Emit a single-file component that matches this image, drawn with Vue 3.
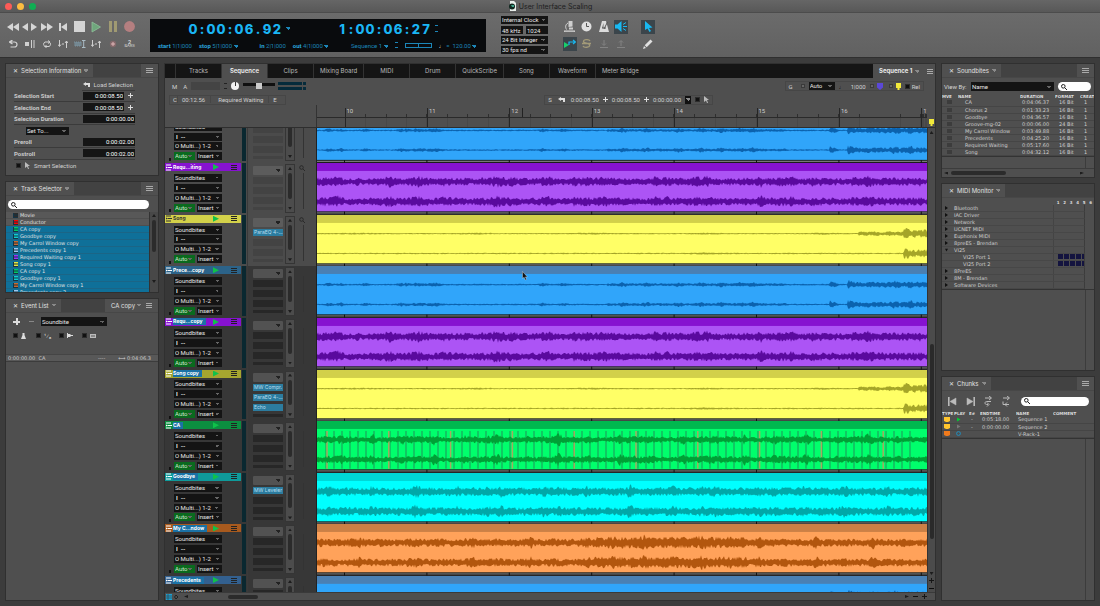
<script setup>
import { ref } from 'vue'

const tabs = ['Tracks', 'Sequence', 'Clips', 'Mixing Board', 'MIDI', 'Drum', 'QuickScribe', 'Song', 'Waveform', 'Meter Bridge']
const activeTab = ref('Sequence')
const clock = [...'0:00:06.92']
const frames = [...'1:00:06:27']
const isMark = c => c === ':' || c === '.'

const selectionRows = [
  { label: 'Selection Start', value: '0:00:08.50', plus: true },
  { label: 'Selection End', value: '0:00:08.50', plus: true },
  { label: 'Selection Duration', value: '0:00:00.00' }
]
const rollRows = [
  { label: 'Preroll', value: '0:00:02.00' },
  { label: 'Postroll', value: '0:00:02.00' }
]
const selector = [
  ['Movie', '#2b2b2b', false], ['Conductor', '#f00', false], ['CA copy', '#0c6', true], ['Goodbye copy', '#1cc', true],
  ['My Carrol Window copy', '#c76a30', true], ['Precedents copy 1', '#9cc8f0', true], ['Required Waiting copy 1', '#93f', true],
  ['Song copy 1', '#e8e840', true], ['CA copy 1', '#0c6', true], ['Goodbye copy 1', '#1cc', true],
  ['My Carrol Window copy 1', '#c76a30', true], ['Precedents copy 2', '#9cc8f0', true]
]
const bites = [
  ['CA', '0:04:06.37', '16 Bit'], ['Chorus 2', '0:01:33.23', '16 Bit'], ['Goodbye', '0:04:36.57', '16 Bit'],
  ['Groove-mg-02', '0:00:06.00', '24 Bit'], ['My Carrol Window', '0:03:49.88', '16 Bit'], ['Precedents', '0:04:25.20', '16 Bit'],
  ['Required Waiting', '0:05:17.60', '16 Bit'], ['Song', '0:04:32.12', '16 Bit']
]
const devices = [
  ['Bluetooth', 'c'], ['IAC Driver', 'c'], ['Network', 'c'], ['UCNET MIDI', 'c'], ['Euphonix MIDI', 'c'], ['8preES - Brendan', 'c'],
  ['VI25', 'o'], ['VI25 Port 1', 'p'], ['VI25 Port 2', 'p'], ['8PreES', 'c'], ['8M - Brendan', 'c'], ['Software Devices', 'c']
]
const chunks = [
  { name: 'Sequence 1', end: '0:05:18.00', color: '#ffc52e', play: '#0c3' },
  { name: 'Sequence 2', end: '0:00:00.00', color: '#ffc52e', play: '#777' },
  { name: 'V-Rack-1', end: '', color: '#f07a1c', play: '' }
]

/* waveform drawing: repeatable noise shaped by an envelope */
function noise(seed) {
  let s = seed
  return () => {
    s = (s * 1664525 + 1013904223) % 4294967296
    return s / 4294967296
  }
}
function wave(seed, center, env) {
  const rnd = noise(seed)
  const up = []
  const down = []
  for (let x = 0; x <= 610; x++) {
    const a = env(x)
    up.push(`${x} ${(center - a * (0.4 + 0.85 * rnd())).toFixed(1)}`)
    down.unshift(`${x} ${(center + a * (0.4 + 0.85 * rnd())).toFixed(1)}`)
  }
  return `M${up.join('L')}L${down.join('L')}Z`
}
const bump = (x, at, w) => Math.max(0, 1 - Math.abs(x - at) / w)
const tail = (x, at, w) => (x >= at ? Math.max(0, 1 - (x - at) / w) : 0)
const blueEnv = x => {
  let a = 0.7
  for (const p of [12, 24, 49, 84, 226, 247, 306, 330, 361, 384, 404, 423, 436]) a += 1.1 * bump(x, p, 6)
  if (x > 88 && x < 128) a += 0.8 * Math.abs(Math.sin(x / 5)) + 0.3
  if (x > 290 && x < 470) a += 0.5
  a += 2.6 * tail(x, 513, 10)
  if (x > 530) a = 2.4 + 2 * tail(x, 530, 8) + 1.2 * bump(x, 578, 5) + 2 * bump(x, 594, 3)
  return a
}
const purpleEnv = x => 3.4 + 0.7 * Math.sin(x / 9) * Math.sin(x / 23) + 1.5 * bump(x % 53, 20, 5) + 0.8 * bump(x % 31, 9, 4)
const songTop = x => (x > 586 ? 3.6 + 2 * tail(x, 586, 8) : x > 541 ? 1.9 + 0.6 * tail(x, 541, 6) : 0.6 + 0.3 * bump(x % 117, 40, 20))
const songBottom = x => (x > 586 ? 3.6 + 2 * tail(x, 586, 8) : 0.6 + 0.4 * bump(x, 390, 30))
const greenEnv = x => 2.8 + 1.6 * bump(x % 62, 56, 4) + 1.2 * bump(x % 31, 24, 4) + 0.5 * Math.sin(x / 12)
const cyanEnv = x => 3.6 + 1.6 * bump(x % 43, 12, 5) + 1 * bump(x % 71, 30, 6)
const orangeEnv = x => (x > 275 && x < 430 ? 4.8 : 3.2) + 1.8 * bump(x % 57, 43, 4) + 0.6 * bump(x % 29, 6, 8)

const kinds = {
  blue: [blueEnv, blueEnv], purple: [purpleEnv, purpleEnv], yellow: [songTop, songBottom],
  green: [greenEnv, greenEnv], cyan: [cyanEnv, cyanEnv], orange: [orangeEnv, orangeEnv]
}
const waves = Object.fromEntries(Object.entries(kinds).map(([k, e], i) => [k, wave(i * 77 + 5, 18.8, e[0]) + wave(i * 31 + 9, 38.8, e[1])]))

const tracks = [
  { name: '', kind: 'blue', tint: 'sky', part: 'tailing', inserts: [] },
  { name: 'Requ...iting', kind: 'purple', tint: 'violet', inserts: [] },
  { name: 'Song', kind: 'yellow', tint: 'lemon', inserts: ['ParaEQ 4-...'] },
  { name: 'Prece...copy', kind: 'blue', tint: 'sky', dark: true, inserts: [] },
  { name: 'Requ...copy', kind: 'purple', tint: 'violet', dark: true, sel: true, inserts: [] },
  { name: 'Song copy', kind: 'yellow', tint: 'olive', dark: true, sel: true, inserts: ['MW Compr.', 'ParaEQ 4-...', 'Echo'] },
  { name: 'CA', kind: 'green', tint: 'leaf', dark: true, sel: true, inserts: [] },
  { name: 'Goodbye', kind: 'cyan', tint: 'teal', dark: true, sel: true, inserts: ['MW Leveler'] },
  { name: 'My C...ndow', kind: 'orange', tint: 'rust', dark: true, sel: true, inserts: [] },
  { name: 'Precedents', kind: 'blue', tint: 'navy', dark: true, sel: true, inserts: [] }
]
const beats = Array.from({ length: 74 }, (_, i) => 9 + i * 8)
const accents = Array.from({ length: 10 }, (_, i) => 10 + i * 61.8)
const bars = Array.from({ length: 8 }, (_, i) => 27.5 + i * 82.4)
</script>

<template>
  <div class="app">
    <header class="titlebar">
      <div class="lights"><i class="r"></i><i class="y"></i><i class="g"></i></div>
      <div class="title">
        <svg width="9" height="10" viewBox="0 0 9 10"><path d="M2 0h4l2 2v8H2z" fill="#e8eeea" /><circle cx="4" cy="5.500" r="3" fill="#10281f" /><path d="M3 4h3v2H4z" fill="#3fa58a" /></svg>
        <span>User Interface Scaling</span>
      </div>
    </header>

    <section class="toolbar">
      <div class="transport">
        <button aria-label="Rewind"><svg width="12" height="8" viewBox="0 0 12 8"><path d="M6 0v8L0 4zM12 0v8L6 4z" fill="#d6d6d6" /></svg></button>
        <span class="pair">
          <button aria-label="Step back"><svg width="6" height="8" viewBox="0 0 6 8"><path d="M6 0v8L0 4z" fill="#d6d6d6" /></svg></button>
          <button aria-label="Step forward"><svg width="6" height="8" viewBox="0 0 6 8"><path d="M0 0v8l6-4z" fill="#d6d6d6" /></svg></button>
        </span>
        <button aria-label="Fast forward"><svg width="12" height="8" viewBox="0 0 12 8"><path d="M0 0v8l6-4zM6 0v8l6-4z" fill="#d6d6d6" /></svg></button>
        <button aria-label="Return to start"><svg width="8" height="8" viewBox="0 0 8 8"><path d="M0 0h2v8H0zM8 0v8L2 4z" fill="#d6d6d6" /></svg></button>
        <button aria-label="Stop"><svg width="11" height="11" viewBox="0 0 11 11"><path d="M0 0h11v11H0z" fill="#d4d4d4" /></svg></button>
        <button aria-label="Play"><svg width="10" height="12" viewBox="0 0 10 12"><path d="M1 1l8.500 5L1 11z" fill="#6fa67c" stroke="#8fc09a" stroke-width=".8" /></svg></button>
        <button aria-label="Pause"><svg width="8" height="11" viewBox="0 0 8 11"><path d="M0 0h3v11H0zM5 0h3v11H5z" fill="#a09a72" /></svg></button>
        <button aria-label="Record"><svg width="11" height="11" viewBox="0 0 11 11"><circle cx="5.500" cy="5.500" r="5.400" fill="#b57f80" /></svg></button>
        <button aria-label="Undo play"><svg width="9" height="8" viewBox="0 0 9 8"><path d="M3.500 0L.5 2l3 2M1 2h4.500a2.500 2.500 0 0 1 0 5H1.500" fill="none" stroke="#d4d4d4" stroke-width="1.200" /></svg></button>
        <button aria-label="Stop at"><svg width="10" height="8" viewBox="0 0 10 8"><path d="M0 2h4v4H0zM6 0h1v8H6zM8.500 0h1v8h-1z" fill="#d0d0d0" /></svg></button>
        <button aria-label="Loop"><svg width="10" height="8" viewBox="0 0 10 8"><path d="M3 6.500a2.500 2.500 0 0 1 0-4.500h4M7 2a2.400 2.400 0 0 1 0 4.500H3M6 .5L8 2 6 3.500M4.500 5L3 6.500 4.500 8" fill="none" stroke="#d0d0d0" /></svg></button>
        <button aria-label="Auto record"><svg width="10" height="8" viewBox="0 0 10 8"><path d="M1.500 0v6M0 4.500l1.500 2 1.500-2M4 4h2M8.500 8V1M7 3l1.500-2L10 3" fill="none" stroke="#d0d0d0" /></svg></button>
        <button aria-label="Overdub"><svg width="12" height="8" viewBox="0 0 12 8"><path d="M0 2h1v4h1V2h1v4h1V2h1v4h1V2h1v4" fill="none" stroke="#7f9cab" stroke-width=".8" /><path d="M8 .5h3.500M8 7.500h3.500M9.700.5v7" stroke="#aabcc5" fill="none" /></svg></button>
        <button aria-label="Punch"><svg width="10" height="8" viewBox="0 0 10 8"><path d="M1.500 0v6M0 4.500l1.500 2 1.500-2M4 4h2M8.500 8V1M7 3l1.500-2L10 3" fill="none" stroke="#d0d0d0" /></svg></button>
        <button aria-label="Click"><svg width="8" height="8" viewBox="0 0 8 8"><circle cx="4" cy="4" r="3.200" fill="#84696b" /><path d="M4 2v4M2 4h4" stroke="#e0b6b8" /></svg></button>
        <button class="count" aria-label="Countoff"><b>2</b><small>BARS</small></button>
      </div>

      <div class="lcd">
        <div class="time"><span v-for="(c, i) in clock" :key="i" :class="{ mark: isMark(c) }">{{ c }}</span><i class="caret"></i></div>
        <div class="time"><span v-for="(c, i) in frames" :key="i" :class="{ mark: isMark(c) }">{{ c }}</span><i class="spin"></i></div>
        <div class="marks">
          <span><b>start</b> 1|1|000</span><span><b>stop</b> 5|1|000 <i class="caret"></i></span>
          <span class="mid"><b>in</b> 2|1|000</span><span><b>out</b> 4|1|000 <i class="caret"></i></span>
        </div>
        <div class="marks tempo">
          <span>Sequence 1 <i class="caret"></i></span><i class="bar2"></i><i class="slide"></i>
          <span><b class="note">♩</b> = &nbsp;120.00 <i class="caret"></i></span>
        </div>
      </div>

      <div class="setup">
        <select class="dd wide" aria-label="Clock"><option>Internal Clock</option></select>
        <button class="box">48 kHz</button><button class="box">1024</button>
        <select class="dd wide" aria-label="Bit depth"><option>24 Bit Integer</option></select>
        <select class="dd wide" aria-label="Frame rate"><option>30 fps nd</option></select>
      </div>

      <div class="modes">
        <button aria-label="Microscope"><svg width="11" height="11" viewBox="0 0 11 11"><path d="M4.500 0h4v5.500l-4 .5zM5 6.500h4v2H5z" fill="#cfcfcf" /><path d="M4 2C1.500 3.500 1 6 2.500 8.500M0 10h11v1H0z" fill="none" stroke="#d8d8d8" /></svg></button>
        <button aria-label="Clock"><svg width="11" height="11" viewBox="0 0 11 11"><circle cx="5.500" cy="5.500" r="5" fill="#e0e0e0" /><path d="M5.500 2v3.500H8" fill="none" stroke="#555" /></svg></button>
        <button aria-label="Metronome"><svg width="10" height="11" viewBox="0 0 10 11"><path d="M3 0h4l3 11H0z" fill="#dcdcdc" /><path d="M5 8L8.500 1M3 7h4" stroke="#555" /><path d="M4.500 2l-1.500 5h1.500z" fill="#666" /></svg></button>
        <button class="on" aria-label="Audible"><svg width="12" height="11" viewBox="0 0 12 11"><path d="M0 3.500h2.500L6.500 0v11L2.500 7.500H0z" fill="#18b9f2" /><path d="M8 3.500l3-2M8 5.500h4M8 7.500l3 2" stroke="#18b9f2" /></svg></button>
        <button class="on" aria-label="Chase"><svg width="12" height="10" viewBox="0 0 12 10"><path d="M0 3v6l5-3z" fill="#18d06b" /><path d="M5 6V3h6M9 1l2.500 2L9 5" fill="none" stroke="#18b9f2" stroke-width="1.200" /></svg></button>
        <button aria-label="Solo"><svg width="9" height="9" viewBox="0 0 9 9"><path d="M8 2C7 0 1.500.3 1.500 2.400S7.700 4 7.700 6.300 2 9 1 7M0 4.500h9" fill="none" stroke="#a39a78" stroke-width="1.300" /></svg></button>
        <button aria-label="Bounce in"><svg width="8" height="8" viewBox="0 0 8 8"><path d="M4 0v5M2 3.500l2 2 2-2M0 7.500h8" fill="none" stroke="#838383" /></svg></button>
        <button aria-label="Bounce out"><svg width="8" height="8" viewBox="0 0 8 8"><path d="M4 6V1M2 2.500l2-2 2 2M0 7.500h8" fill="none" stroke="#838383" /></svg></button>
      </div>
      <div class="tools">
        <button class="on" aria-label="Pointer"><svg width="9" height="11" viewBox="0 0 9 11"><path d="M1 0l7.500 6.500L5 7l2 3-1.500 1-2-3.500L1 9z" fill="#18b9f2" /></svg></button>
        <button aria-label="Pencil"><svg width="10" height="10" viewBox="0 0 10 10"><path d="M0 10l1-3 2 2zM1.700 6.300L7.500.5l2 2-5.800 5.800z" fill="#e0e0e0" /></svg></button>
      </div>
    </section>

    <main class="work">
      <aside class="side left">
        <section class="panel info">
          <div class="head"><div class="tab"><i class="x">✕</i>Selection Information<i class="caret"></i></div><button class="menu" aria-label="Panel menu"><i></i></button></div>
          <div class="fields">
            <div class="load"><svg width="7" height="5" viewBox="0 0 7 5"><path d="M3 0L0 2l3 2V3h2v2h2V1H3z" fill="#ddd" /></svg><span>Load Selection</span></div>
            <label v-for="r in selectionRows" :key="r.label" class="line"><b>{{ r.label }}</b><input :value="r.value" /><i v-if="r.plus" class="plus"></i></label>
            <div class="setto"><select class="dd" aria-label="Set to"><option>Set To...</option></select></div>
            <label v-for="r in rollRows" :key="r.label" class="line"><b>{{ r.label }}</b><input :value="r.value" /></label>
            <label class="smart"><input type="checkbox" /><svg width="5" height="7" viewBox="0 0 5 7"><path d="M0 0l5 4H3l1 3-1 0-1-2.500L0 6z" fill="#bbb" /></svg>Smart Selection</label>
          </div>
        </section>

        <section class="panel selector">
          <div class="head"><div class="tab"><i class="x">✕</i>Track Selector<i class="caret"></i></div><button class="menu" aria-label="Panel menu"><i></i></button></div>
          <div class="search"><svg width="6" height="6" viewBox="0 0 6 6"><circle cx="2.300" cy="2.300" r="1.800" fill="none" stroke="#222" /><path d="M3.600 3.600L6 6" stroke="#222" /></svg><input aria-label="Search tracks" /></div>
          <div class="scrolly">
            <ul class="tracklist">
              <li v-for="t in selector" :key="t[0]" :class="{ sel: t[2] }"><svg width="5" height="5" viewBox="0 0 5 5"><rect width="5" height="5" fill="#153445" /><path d="M1 0h4v1.500H1zM1 2.500h4V4H1z" :fill="t[1]" /></svg>{{ t[0] }}</li>
            </ul>
            <div class="vbar"><i class="up"></i><i class="thumb"></i><i class="down"></i></div>
          </div>
        </section>

        <section class="panel events">
          <div class="head"><div class="tab"><i class="x">✕</i>Event List<i class="caret"></i></div><div class="menu ca">CA copy<i class="caret"></i><button class="bars" aria-label="Panel menu"></button></div></div>
          <div class="evtools"><i class="plus big"></i><i class="minus"></i><select class="dd" aria-label="Event type"><option>Soundbite</option></select></div>
          <div class="evchecks">
            <label><input type="checkbox" aria-label="Metronome grid" /><svg width="5" height="6" viewBox="0 0 5 6"><path d="M1.500 0h2v2L5 6H0l1.500-4z" fill="#ddd" /></svg></label>
            <label><input type="checkbox" aria-label="Fraction grid" /><span>¹⁄₈</span></label>
            <label><input type="checkbox" aria-label="Marker grid" /><svg width="6" height="5" viewBox="0 0 6 5"><path d="M0 0h1v5H0zM1 1h2l1 1h2v1H4L3 4H1z" fill="#ddd" /></svg></label>
            <label><input type="checkbox" aria-label="Frame grid" /><svg width="6" height="4" viewBox="0 0 6 4"><path d="M0 0h6v4H0z" fill="#bbb" /><path d="M1 2h4" stroke="#555" /></svg></label>
          </div>
          <div class="evrow"><span>0:00:00.00&nbsp; CA</span><span>----</span><span>⟷ 0:04:06.3</span></div>
          <div class="fill"></div>
        </section>
      </aside>

      <section class="center">
        <nav class="tabs">
          <i class="stub"></i>
          <button v-for="t in tabs" :key="t" :class="{ active: t === activeTab }" @click="activeTab = t">{{ t }}</button>
          <div class="seq"><b>Sequence 1</b><i class="caret"></i><i class="bars"></i></div>
        </nav>
        <div class="strip">
          <div class="grp"><span>M</span><span class="gap">A</span><i class="well"></i><i class="updn"></i><i class="knob"></i><i class="fader"></i><i class="meter"></i></div>
          <div class="grp boxed right"><span>G</span><i class="sq first"></i><select class="dd auto" aria-label="Grid"><option>Auto</option></select><b class="dark">♩</b><span class="gap">1|000</span><i class="sq"></i><svg width="6" height="7" viewBox="0 0 6 7"><path d="M0 0h6v4.500L3 7 0 4.500z" fill="#5b48d8" /></svg><i class="sq gap"></i><svg width="5" height="7" viewBox="0 0 5 7"><path d="M0 0h5v5H3.500v2h-2V5H0z" fill="#f3ea3a" /></svg><label class="rel"><input type="checkbox" /> Rel</label></div>
        </div>
        <div class="strip low">
          <div class="grp boxed counter"><span>C</span><span class="cnt">00:12.56</span><span class="cnt name">Required Waiting</span><span class="cnt">E</span></div>
          <div class="grp boxed pos"><span>S</span><svg class="gap" width="7" height="5" viewBox="0 0 7 5"><path d="M3 0L0 2l3 2V3h2v2h2V1H3z" fill="#ddd" /></svg><span class="gap">0:00:08.50</span><i class="plus"></i><span>0:00:08.50</span><i class="plus"></i><span>0:00:00.00</span><button class="drop" aria-label="Units"><i class="caret"></i></button><input type="checkbox" aria-label="Smart selection" /><svg width="5" height="7" viewBox="0 0 5 7"><path d="M0 0l5 4H3l1 3H3L2 4.500 0 6z" fill="#bbb" /></svg></div>
        </div>
        <div class="timeline">
          <div class="ruler">
            <div class="cell nolabel"></div>
            <div v-for="n in 7" :key="n" class="cell"><span>{{ n + 9 }}</span></div>
            <div class="cell"><span>17</span></div>
            <i class="playhead"></i>
          </div>
          <div class="pin"><svg width="5" height="7" viewBox="0 0 5 7"><path d="M0 0h5v5H3.500v2h-2V5H0z" fill="#f3ea3a" /></svg></div>
        </div>
        <div class="body">
          <div class="tracks">
            <div v-for="(t, i) in tracks" :key="i" class="track" :class="[t.part, t.kind, { dim: t.dark }]">
              <div class="inner">
                <div class="ctl">
                  <div class="thead" :class="t.tint"><svg width="6" height="7" viewBox="0 0 6 7"><path d="M0 .5h5v1H0zM0 5.500h5v1H0zM2 3h4v1H2zM0 2.500L2 3.500 0 4.500z" fill="currentColor" /></svg><b :class="{ hl: t.sel }">{{ t.name }}</b><i class="tri"></i><i class="bars"></i></div>
                  <div class="opts">
                    <select class="dd" aria-label="Content"><option>Soundbites</option></select>
                    <select class="dd bold" aria-label="Input"><option>I&nbsp; --</option></select>
                    <select class="dd out" aria-label="Output"><option>O Multi...) 1-2</option></select>
                    <div class="two"><select class="dd green" aria-label="Automation"><option>Auto</option></select><select class="dd" aria-label="Insert view"><option>Insert</option></select></div>
                  </div>
                </div>
                <i class="vu"></i>
                <div class="ins">
                  <button class="pick" aria-label="Insert preset"><i class="caret"></i></button>
                  <div v-for="n in 4" :key="n" class="slot" :class="{ used: t.inserts[n - 1] }">{{ t.inserts[n - 1] }}</div>
                </div>
                <div class="vbar mini"><i class="up"></i><i class="thumb"></i><i class="down"></i></div>
                <div class="zoomer"><svg width="6" height="6" viewBox="0 0 6 6"><circle cx="2.500" cy="2.500" r="1.800" fill="none" stroke="#222" stroke-width=".8" /><path d="M4 4l2 2" stroke="#222" stroke-width=".8" /></svg></div>
                <div class="clip">
                  <svg viewBox="0 0 610 52" preserveAspectRatio="none">
                    <rect class="cbody" width="610" height="49" />
                    <rect class="chead" width="610" height="8" />
                    <g v-if="t.kind === 'green'">
                      <path v-for="b in beats" :key="b" :d="`M${b} 10V48`" stroke="#23915a" stroke-width="1" />
                      <path v-for="b in accents" :key="b" :d="`M${b} 10V48`" stroke="#a8a860" stroke-width="1.500" />
                    </g>
                    <path class="cwave" :d="waves[t.kind]" />
                    <rect y="48.800" width="610" height="1" fill="#16201f" />
                    <rect y="49.800" width="610" height="1.200" fill="#777" />
                    <rect y="51" width="610" height="1" fill="#1c1c1c" />
                    <path v-for="b in bars" :key="b" :d="`M${b} 49V52`" stroke="#111" />
                  </svg>
                </div>
              </div>
            </div>
            <svg class="cursor" width="6" height="10" viewBox="0 0 6 10"><path d="M.5.5v7l1.600-1.300L3.300 9l1.200-.6-1.100-2.500h2z" fill="#111" stroke="#ddd" stroke-width=".4" /></svg>
          </div>
          <div class="vscroll"><i class="up"></i><div class="rail"><i class="thumb"></i></div><i class="down"></i><i class="plus k"></i><i class="minus k"></i></div>
        </div>
        <footer class="hscroll"><svg width="13" height="6" viewBox="0 0 13 6"><path d="M0 0h6v6H0z" fill="#1fa0cf" /><path d="M2 0v6M0 2h6M0 4h6" stroke="#30434c" stroke-width=".7" /><path d="M10 1l2 2-2 2-1.500-2z" fill="none" stroke="#222" /></svg><i class="lft"></i><i class="thumb"></i><span class="ends"><i class="rgt"></i><i class="minus k"></i><i class="plus k"></i></span></footer>
      </section>

      <aside class="side rightcol">
        <section class="panel bites">
          <div class="head"><div class="tab"><i class="x">✕</i>Soundbites<i class="caret"></i></div><button class="menu" aria-label="Panel menu"><i></i></button></div>
          <div class="viewby"><label for="viewby">View By:</label><select id="viewby" class="dd"><option>Name</option></select><div class="search"><svg width="6" height="6" viewBox="0 0 6 6"><circle cx="2.300" cy="2.300" r="1.800" fill="none" stroke="#222" /><path d="M3.600 3.600L6 6" stroke="#222" /></svg><input aria-label="Search soundbites" /></div></div>
          <table class="list soundbites">
            <colgroup><col class="c1" /><col class="c2" /><col class="c3" /><col class="c4" /><col /></colgroup>
            <thead><tr><th>MVE</th><th>NAME</th><th>DURATION</th><th>FORMAT</th><th>CREAT</th></tr></thead>
            <tbody><tr v-for="b in bites" :key="b[0]"><td><i class="chip"></i></td><td class="nm">{{ b[0] }}</td><td class="du">{{ b[1] }}</td><td class="fm">{{ b[2] }}</td><td class="fm">1</td></tr></tbody>
          </table>
          <div class="fill lined"></div>
          <div class="hbar"><i class="lft"></i><i class="thumb"></i><i class="rgt"></i></div>
        </section>

        <section class="panel midi">
          <div class="head"><div class="tab"><i class="x">✕</i>MIDI Monitor<i class="caret"></i></div></div>
          <div class="chans"><span v-for="n in 6" :key="n">{{ n }}</span></div>
          <ul class="devices">
            <li v-for="d in devices" :key="d[0]" :class="d[1]"><i class="tw"></i><span>{{ d[0] }}</span><em><template v-if="d[1] === 'p'"><i v-for="n in 5" :key="n"></i></template></em></li>
          </ul>
          <div class="fill lined"></div>
        </section>

        <section class="panel chunks">
          <div class="head"><div class="tab"><i class="x">✕</i>Chunks<i class="caret"></i></div><button class="menu" aria-label="Panel menu"><i></i></button></div>
          <div class="ctools">
            <button aria-label="Previous chunk"><svg width="9" height="9" viewBox="0 0 9 9"><path d="M0 0h1.300v9H0zM8 1v7L2 4.500z" fill="#bbb" stroke="#bbb" stroke-width=".5" /></svg></button>
            <button aria-label="Next chunk"><svg width="9" height="9" viewBox="0 0 9 9"><path d="M7.700 0H9v9H7.700zM1 1v7l6-3.500z" fill="#bbb" stroke="#bbb" stroke-width=".5" /></svg></button>
            <button aria-label="Chain chunks"><svg width="9" height="11" viewBox="0 0 9 11"><path d="M1 2h6M5 0l2.500 2L5 4M7 5.500H2.500c-2 0-2 3 0 3H4M3 6.500l2 2-2 2" fill="none" stroke="#bbb" /></svg></button>
            <button aria-label="Cue chunks"><svg width="9" height="11" viewBox="0 0 9 11"><path d="M1 2h6M5 0l2.500 2L5 4M1 5.500v3h6M5 6.500l-2 2 2 2" fill="none" stroke="#bbb" /></svg></button>
            <div class="search"><svg width="6" height="6" viewBox="0 0 6 6"><circle cx="2.300" cy="2.300" r="1.800" fill="none" stroke="#222" /><path d="M3.600 3.600L6 6" stroke="#222" /></svg><input aria-label="Search chunks" /></div>
          </div>
          <table class="list chunklist">
            <colgroup><col class="k1" /><col class="k2" /><col class="k3" /><col class="k4" /><col class="k5" /><col /></colgroup>
            <thead><tr><th>TYPE</th><th>PLAY</th><th>E#</th><th>ENDTIME</th><th>NAME</th><th>COMMENT</th></tr></thead>
            <tbody><tr v-for="c in chunks" :key="c.name">
              <td><svg width="6" height="5" viewBox="0 0 6 5"><path d="M0 0h6v4L4 5H2L0 4z" :fill="c.color" /></svg></td>
              <td><svg width="5" height="5" viewBox="0 0 5 5"><path v-if="c.play" d="M1 .5l3.500 2L1 4.500z" :fill="c.play" /><circle v-else cx="2.500" cy="2.500" r="1.900" fill="none" stroke="#1f8fc0" /></svg></td>
              <td>{{ c.end ? '-' : '' }}</td><td>{{ c.end }}</td><td>{{ c.name }}</td><td></td>
            </tr></tbody>
          </table>
          <div class="fill lined"></div>
        </section>
      </aside>
    </main>
  </div>
</template>

<style>
html, body { margin: 0; background: #3d3d3d; }
</style>

<style scoped>
* { box-sizing: border-box; }
.app { height: 100vh; display: flex; flex-direction: column; overflow: hidden; background: #3c3c3c; color: #d0d0d0; font: 6px/7px Roboto, sans-serif; }
i, em { font-style: normal; }
button { border: 0; padding: 0; background: none; color: inherit; font: inherit; display: flex; align-items: center; justify-content: center; }
input { border: 0; padding: 0; margin: 0; font: inherit; min-width: 0; outline: 0; }
ul { list-style: none; margin: 0; padding: 0; }
svg { display: block; flex: none; }
input[type="checkbox"] { appearance: none; width: 5px; height: 5px; border: 1px solid #2c2c2c; background: #111; flex: none; }

.caret { display: inline-block; width: 4px; height: 3px; flex: none; background: conic-gradient(from 315deg at 50% 100%, #8a8a8a 90deg, transparent 0); }
.dd { appearance: none; border: 0; border-radius: 0; margin: 0; padding: 0 0 0 1px; height: 8px; color: #e8e8e8; font: 6px/8px Roboto, sans-serif; min-width: 0; background: conic-gradient(from 315deg at 50% 100%, #666 90deg, transparent 0) right 3px center / 4px 2px no-repeat #141414; }
.plus { width: 5px; height: 5px; flex: none; background: linear-gradient(#ddd, #ddd) center / 1px 5px no-repeat, linear-gradient(#ddd, #ddd) center / 5px 1px no-repeat; }
.plus.big { width: 7px; height: 7px; background-size: 2px 7px, 7px 2px; }
.plus.k, .minus.k { filter: brightness(0.1); }
.minus { width: 5px; height: 5px; flex: none; background: linear-gradient(#888, #888) center / 5px 1px no-repeat; }
.bars { width: 6px; height: 5px; flex: none; background: repeating-linear-gradient(#aaa 0 1px, transparent 1px 2px); }
.up, .down, .lft, .rgt { width: 4px; height: 3px; flex: none; background: #1c1c1c; clip-path: polygon(50% 0, 100% 100%, 0 100%); }
.down { clip-path: polygon(0 0, 100% 0, 50% 100%); }
.lft { clip-path: polygon(100% 0, 100% 100%, 0 50%); }
.rgt { clip-path: polygon(0 0, 100% 50%, 0 100%); }

.titlebar { flex: none; height: 13px; position: relative; display: flex; align-items: center; justify-content: center; background: linear-gradient(#666, #585858); border-bottom: 1px solid #4c4c4c; }
.lights { position: absolute; left: 5px; top: 3px; display: flex; gap: 5px; }
.lights i { width: 7px; height: 7px; border-radius: 50%; }
.lights .r { background: #fc5b57; }
.lights .y { background: #fdbc40; }
.lights .g { background: #0fae53; }
.title { display: flex; align-items: center; gap: 2px; font: 7px/13px Inter, sans-serif; color: #1e1e1e; }

.toolbar { flex: none; height: 45px; display: flex; align-items: center; padding: 0 5px; background: linear-gradient(#6b6b6b, #616161); border-bottom: 1px solid #2f2f2f; }
.transport { width: 133px; display: grid; grid-template-columns: repeat(8, 1fr); grid-auto-rows: 17px; place-items: center; margin-right: 12px; }
.pair { display: flex; gap: 3px; }
.count { flex-direction: column; color: #ddd; font: 5px/4px Inter, sans-serif; }
.count small { font-size: 4px; line-height: 4px; }
.lcd { width: 336px; height: 33px; background: #090b0d; display: grid; grid-template-columns: 187px 1fr; grid-template-rows: 20px 13px; color: #1c86b8; }
.time { display: flex; align-items: center; padding-left: 38px; color: #1ab6f5; font: 800 13px/20px Inter, sans-serif; }
.time + .time { padding-left: 0; }
.time span { width: 10px; text-align: center; flex: none; }
.time .mark { width: 8px; }
.time .caret { margin-left: 4px; }
.spin { width: 3px; height: 7px; margin-left: 4px; border: 1px solid #1c86b8; border-width: 1px 0; }
.marks { display: flex; align-items: center; padding-left: 8px; gap: 7px; }
.marks b { color: #2ba6dd; }
.marks .mid { margin-left: 15px; }
.marks .caret, .time .caret { background: conic-gradient(from 315deg at 50% 100%, #1c86b8 90deg, transparent 0); }
.tempo { padding-left: 14px; }
.tempo .bar2 { width: 3px; height: 6px; border: 1px solid #1c86b8; border-width: 1px 0; }
.tempo .slide { width: 27px; height: 5px; border: 1px solid #1c86b8; background: linear-gradient(#1c86b8, #1c86b8) center / 1px 5px no-repeat; }
.marks .note { color: #ddd; }
.setup { width: 47px; margin-left: 15px; display: grid; grid-template-columns: 22px 1fr; gap: 2px 3px; }
.setup .wide { grid-column: span 2; }
.box { height: 8px; background: #141414; color: #e8e8e8; justify-content: flex-start; padding-left: 1px; }
.modes { margin-left: 13px; display: grid; grid-template-columns: repeat(4, 17px); grid-auto-rows: 17px; place-items: center; }
.tools { margin-left: 12px; display: grid; grid-auto-rows: 17px; place-items: center; }
.modes button, .tools button { width: 14px; height: 14px; }
.modes .on, .tools .on { background: #3b454b; }

.work { flex: 1; min-height: 0; display: grid; grid-template-columns: 154px minmax(0, 1fr) 154px; gap: 5px; padding: 5px; }
.side { display: grid; min-height: 0; min-width: 0; gap: 5px; }
.left { grid-template-rows: 113px 112px minmax(0, 1fr); }
.rightcol { grid-template-rows: 115px 188px minmax(0, 1fr); }
.panel { background: #4f4f4f; border: 1px solid #303030; display: flex; flex-direction: column; overflow: hidden; min-height: 0; min-width: 0; }
.head { flex: none; height: 14px; background: #424242; display: flex; justify-content: space-between; align-items: stretch; border-bottom: 1px solid #474747; }
.tab { display: flex; align-items: center; gap: 3px; background: #505050; padding: 0 5px 0 7px; font: 6px/13px Inter, sans-serif; color: #e0e0e0; }
.tab .x { font: 6px/13px "DejaVu Sans", sans-serif; }
.menu { width: 17px; background: #505050; }
.menu i { width: 7px; height: 6px; background: repeating-linear-gradient(#aaa 0 1px, transparent 1px 2px); }
.menu.ca { width: auto; padding: 0 6px; display: flex; align-items: center; gap: 2px; font-family: Inter, sans-serif; color: #e0e0e0; }
.menu.ca .caret { height: 3px; width: 4px; background: conic-gradient(from 315deg at 50% 100%, #8a8a8a 90deg, transparent 0); margin-right: 3px; }
.fill { flex: 1; }

.fields { flex: 1; padding: 1px 23px 4px 8px; display: grid; grid-template-columns: minmax(0, 1fr); grid-template-rows: repeat(8, minmax(0, 1fr)); }
.load, .line, .smart, .setto { display: flex; align-items: center; min-width: 0; }
.load { justify-content: flex-end; gap: 4px; padding-right: 2px; margin-left: 68px; border-bottom: 1px solid #3b3b3b; }
.line { border-bottom: 1px solid #3b3b3b; }
.line b { width: 69px; flex: none; color: #cacaca; }
.line input { flex: 1; width: 0; height: 8px; background: #151515; color: #fff; text-align: right; padding-right: 1px; }
.line .plus { margin: 0 2px 0 4px; }
.setto { padding-left: 12px; }
.setto .dd { width: 43px; }
.smart { gap: 4px; padding-left: 2px; }

.search { flex: none; height: 9px; border-radius: 5px; background: #fff; display: flex; align-items: center; padding: 0 3px; overflow: hidden; }
.search input { flex: 1; width: 0; background: none; }
.selector .search { margin: 4px 9px 3px 2px; }
.scrolly { flex: 1; min-height: 0; display: flex; }
.tracklist { flex: 1; overflow: hidden; font: 5px/7px "DejaVu Sans", sans-serif; color: #e0e0e0; background: #585858; }
.tracklist li { display: flex; align-items: center; gap: 2px; height: 7px; padding-left: 7px; border-bottom: 1px solid #4e4e4e; }
.tracklist .sel { background: #0f7099; border-color: #1b6586; }
.vbar { width: 9px; flex: none; background: #484848; border-left: 1px solid #333; display: flex; flex-direction: column; align-items: center; padding: 2px 0 9px; }
.vbar .thumb { width: 4px; height: 32px; margin-top: 3px; background: #2b2b2b; border-radius: 2px; }
.vbar .down { margin-top: auto; }

.evtools { display: flex; align-items: center; padding: 4px 7px 0; gap: 9px; }
.evtools .dd { width: 66px; height: 9px; margin-left: -2px; }
.evchecks { display: flex; padding: 6px 7px; height: 19px; }
.evchecks label { width: 23px; display: flex; align-items: center; gap: 3px; color: #ddd; }
.evrow { margin-top: 9px; height: 8px; padding: 0 7px 0 2px; display: grid; grid-template-columns: 90px 1fr auto; align-items: center; font: 5px/7px "DejaVu Sans", sans-serif; border-top: 1px solid #454545; border-bottom: 1px solid #3c3c3c; background: #585858; white-space: nowrap; }

.center { display: flex; flex-direction: column; min-height: 0; background: #4f4f4f; border: 1px solid #303030; }
.tabs { flex: none; height: 14px; display: flex; background: #151515; font: 6px/14px Inter, sans-serif; color: #b8b8b8; }
.stub { width: 10px; }
.tabs button { min-width: 46px; padding: 0 6px; border-left: 1px solid #333; white-space: nowrap; }
.tabs button.active { background: #4f4f4f; color: #f0f0f0; font-weight: 600; }
.seq { margin-left: auto; width: 62px; background: #4f4f4f; display: flex; align-items: center; gap: 3px; padding-left: 6px; color: #e8e8e8; }
.seq .bars { margin-left: 5px; }
.strip { flex: none; height: 16px; display: flex; align-items: center; justify-content: space-between; padding: 0 11px 0 4px; }
.strip.low { height: 11px; padding-right: 222px; }
.grp { display: flex; align-items: center; gap: 4px; height: 10px; padding: 0 3px; color: #d0d0d0; }
.boxed { border: 1px solid #464646; }
.grp .gap { margin-left: 2px; }
.counter { gap: 0; }
.cnt { border-left: 1px solid #464646; padding: 0 5px 0 4px; }
.cnt.name { padding-left: 7px; }
.well { width: 29px; height: 8px; background: #444; }
.updn { width: 3px; height: 6px; border: 1px solid #222; border-width: 1px 0; }
.knob { width: 8px; height: 8px; border-radius: 50%; background: linear-gradient(#333, #333) center top / 1px 4px no-repeat #f2f2f2; }
.fader { width: 32px; height: 6px; background: linear-gradient(#ccc, #ccc) center / 6px 6px no-repeat, linear-gradient(#101010, #101010) top / 32px 3px no-repeat; }
.meter { width: 28px; height: 8px; margin-left: -1px; background: linear-gradient(#4f4f4f, #4f4f4f) 24px 0 / 1px 8px no-repeat, linear-gradient(#062b3b 3px, transparent 3px 5px, #062b3b 5px); }
.sq { width: 4px; height: 4px; background: #666; border: 1px solid #3a3a3a; }
.sq.first { margin-left: 4px; }
.right svg { margin-left: -1px; }
.auto { width: 26px; }
.dark { color: #111; }
.rel { display: flex; align-items: center; gap: 2px; }
.drop { width: 6px; height: 8px; background: #111; }
.timeline { flex: none; display: flex; height: 23px; padding-left: 151px; border-bottom: 1px solid #2e2e2e; }
.ruler { flex: 1; min-width: 0; position: relative; overflow: hidden; display: grid; grid-template-columns: 275fr repeat(7, 824fr) 57fr; background: linear-gradient(#2a2a2a, #2a2a2a) 0 12px / 100% 1px no-repeat; border-left: 1px solid #333; }
.cell { min-width: 0; overflow: hidden; border-left: 1px solid #262626; margin-top: 3px; padding-left: 1px; line-height: 5px; color: #ccc; background: repeating-linear-gradient(90deg, transparent 0 calc(25% - 1px), #2e2e2e calc(25% - 1px) 25%) 0 6px / 100% 3px no-repeat, repeating-linear-gradient(90deg, transparent 0 calc(25% - 1px), #484848 calc(25% - 1px) 25%) 0 10px / 100% 10px no-repeat; }
.cell.nolabel { border: 0; background: none; }
.playhead { position: absolute; left: 205px; top: 3px; width: 1px; height: 9px; background: #222; }
.pin { width: 8px; padding: 14px 0 0 2px; }
.body { flex: 1; min-height: 0; display: flex; }
.tracks { position: relative; flex: 1; min-width: 0; display: grid; grid-template-rows: 35px repeat(8, minmax(0, 1fr)) 16px; }
.track { overflow: hidden; display: flex; flex-direction: column; min-height: 0; background: #4b4b4b; }
.track.dim { background: #373737; }
.inner { flex: 1 0 auto; min-height: 51px; height: 100%; display: flex; }
.tailing .inner { flex: none; height: 51px; margin-top: -16px; }
.ctl { width: 76px; flex: none; display: flex; flex-direction: column; }
.thead { height: 8px; display: flex; align-items: center; gap: 1px; padding: 0 4px 0 1px; color: #fff; font: 5px/7px Inter, sans-serif; }
.thead b { font-weight: 700; padding-right: 3px; margin-right: auto; white-space: nowrap; }
.thead .hl { background: #1a72a6; }
.thead .tri { width: 6px; height: 6px; background: #10c24a; clip-path: polygon(0 0, 100% 50%, 0 100%); margin-right: 11px; }
.thead .bars { background: repeating-linear-gradient(#222 0 1px, transparent 1px 2px); }
.violet { background: #8612d0; }
.lemon { background: #d3d14a; color: #333; }
.sky { background: #2c6389; }
.olive { background: #a5a52f; }
.leaf { background: #0b8f40; }
.teal { background: #0f9a9a; }
.rust { background: #a85a1e; }
.navy { background: #33608f; }
.opts { flex: 1; display: flex; flex-direction: column; justify-content: space-evenly; padding: 1px 19px 1px 9px; background: linear-gradient(#111, #111) 4px 38px / 2px 3px no-repeat; }
.opts .dd { width: 48px; height: 8px; line-height: 8px; flex: none; }
.opts .bold { font-weight: 700; padding-left: 2px; }
.two { display: flex; gap: 2px; }
.opts .two .dd { width: 25px; }
.opts .two .green { width: 21px; background-color: #0a6a1e; color: #cfe8cf; }
.vu { width: 4px; margin: 0 1px 2px; flex: none; background: #0a2830; }
.ins { width: 36px; flex: none; padding: 3px 0 3px 5px; display: grid; grid-template-rows: 8px 8px 8px 8px 4px; row-gap: 2px; border-left: 1px solid #3a3a3a; overflow: hidden; }
.pick { background: #5c5c5c; border-radius: 1px; justify-content: flex-end; padding-right: 3px; margin-bottom: -1px; }
.pick .caret { background: conic-gradient(from 315deg at 50% 100%, #222 90deg, transparent 0); }
.slot { background: #434343; margin-top: 1px; padding-left: 1px; white-space: nowrap; overflow: hidden; color: #b9def0; font: 5px/7px Inter, sans-serif; }
.dim .slot { background: #272727; }
.dim .pick { background: #525252; }
.slot.used, .dim .slot.used { background: #2c7c9f; }
.mini { width: 10px; margin: 1px 3px 2px 2px; border: 1px solid #353535; padding: 2px 0; background: #4c4c4c; }
.mini .thumb { flex: 1; width: 4px; height: auto; margin: 3px 0 8px; }
.zoomer { width: 18px; flex: none; padding: 2px 0 0 1px; background: linear-gradient(#333, #333) 5px 10px / 1px 36px no-repeat; }
.dim .zoomer svg { opacity: 0; }
.clip { flex: 1; min-width: 0; border-left: 1px solid #222; }
.clip svg { width: 100%; height: 100%; }
.blue .cbody { fill: #30a5fa; } .blue .chead { fill: #4a80b3; } .blue .cwave { fill: #0b62ae; }
.purple .cbody { fill: #ac54f5; } .purple .chead { fill: #8612d0; } .purple .cwave { fill: #5a0a9e; }
.yellow .cbody { fill: #ffff66; } .yellow .chead { fill: #d2d04a; } .yellow .cwave { fill: #a5a528; }
.green .cbody { fill: #00ff6c; } .green .chead { fill: #00b84f; } .green .cwave { fill: #00a036; }
.cyan .cbody { fill: #00ffff; } .cyan .chead { fill: #00d6d6; } .cyan .cwave { fill: #00a8a8; }
.orange .cbody { fill: #ffa25a; } .orange .chead { fill: #cb8046; } .orange .cwave { fill: #b2560e; }
.cursor { position: absolute; left: 357px; top: 143px; }
.vscroll { width: 8px; flex: none; display: flex; flex-direction: column; align-items: center; gap: 3px; padding: 3px 0 1px; background: #4b4b4b; border-left: 1px solid #333; }
.rail { flex: 1; display: grid; grid-template-rows: 205fr 193fr 30fr; }
.rail .thumb { grid-row: 2; width: 4px; background: #2a2a2a; border-radius: 2px; }
.hscroll { flex: none; height: 8px; display: flex; align-items: center; padding: 0 8px 0 1px; background: #4f4f4f; border-top: 1px solid #3a3a3a; }
.hscroll .lft { margin-left: 5px; }
.hscroll .thumb { width: 30px; height: 4px; margin-left: 40px; background: #2b2b2b; border-radius: 2px; }
.ends { margin-left: auto; display: flex; align-items: center; gap: 4px; }

.viewby { flex: none; height: 16px; display: flex; align-items: center; padding: 1px 3px 0 2px; color: #d8d8d8; }
.viewby .dd { width: 83px; height: 9px; margin: 0 4px 0 auto; }
.viewby .search { width: 33px; }
.list { border-collapse: collapse; table-layout: fixed; width: 100%; font: 5px/7px "DejaVu Sans", sans-serif; color: #cecece; flex: none; }
.list th, .list td { padding: 0; height: 7px; text-align: left; white-space: nowrap; overflow: hidden; border-bottom: 1px solid #454545; line-height: 6px; }
.list th { font: 700 4px/5px "DejaVu Sans", sans-serif; height: 5px; color: #ddd; border: 0; }
.c1 { width: 16px; } .c2 { width: 62px; } .c3 { width: 35px; } .c4 { width: 25px; }
.chip { display: block; width: 5px; height: 4px; margin-left: 5px; background: #3c3c3c; }
.list .nm { padding-left: 7px; }
.list .du { padding-left: 2px; }
.list .fm { padding-left: 4px; }
.lined { border-top: 1px solid #333; background: linear-gradient(#3c3c3c, #3c3c3c) right 8px top / 1px 100% no-repeat; }
.hbar { flex: none; height: 9px; display: flex; align-items: center; gap: 3px; padding: 0 10px 0 2px; border-top: 1px solid #3c3c3c; }
.hbar .thumb { width: 55px; height: 4px; background: #2b2b2b; border-radius: 2px; }
.hbar .rgt { margin-left: auto; }
.chans { flex: none; height: 7px; display: grid; grid-template-columns: repeat(6, 1fr); width: 39px; margin-left: auto; font: 700 4px/10px "DejaVu Sans", sans-serif; color: #ddd; text-align: center; }
.devices { font: 5px/7px "DejaVu Sans", sans-serif; color: #cecece; }
.devices li { height: 7px; display: flex; align-items: center; padding-left: 3px; margin-right: 9px; border-bottom: 1px solid #474747; border-right: 1px solid #3c3c3c; }
.devices .tw { width: 3px; height: 4px; background: #111; clip-path: polygon(0 0, 100% 50%, 0 100%); margin-right: 6px; }
.devices .o .tw { clip-path: polygon(0 20%, 100% 20%, 50% 90%); }
.devices .p .tw { visibility: hidden; margin-right: 15px; }
.devices em { margin-left: auto; width: 31px; height: 6px; padding: 0 0 0 4px; display: flex; gap: 1px; overflow: hidden; border-left: 1px solid #444; }
.devices em i { width: 5px; height: 5px; flex: none; background: #14143f; }
.ctools { flex: none; height: 20px; display: flex; align-items: center; gap: 9px; padding: 0 5px 0 6px; }
.ctools .search { flex: 1; margin-left: 1px; }
.k1 { width: 12px; } .k2 { width: 15px; } .k3 { width: 11px; } .k4 { width: 36px; } .k5 { width: 37px; }
.chunklist td svg { margin-left: 2px; }
.chunklist td:nth-child(n+3) { padding-left: 2px; }
</style>
